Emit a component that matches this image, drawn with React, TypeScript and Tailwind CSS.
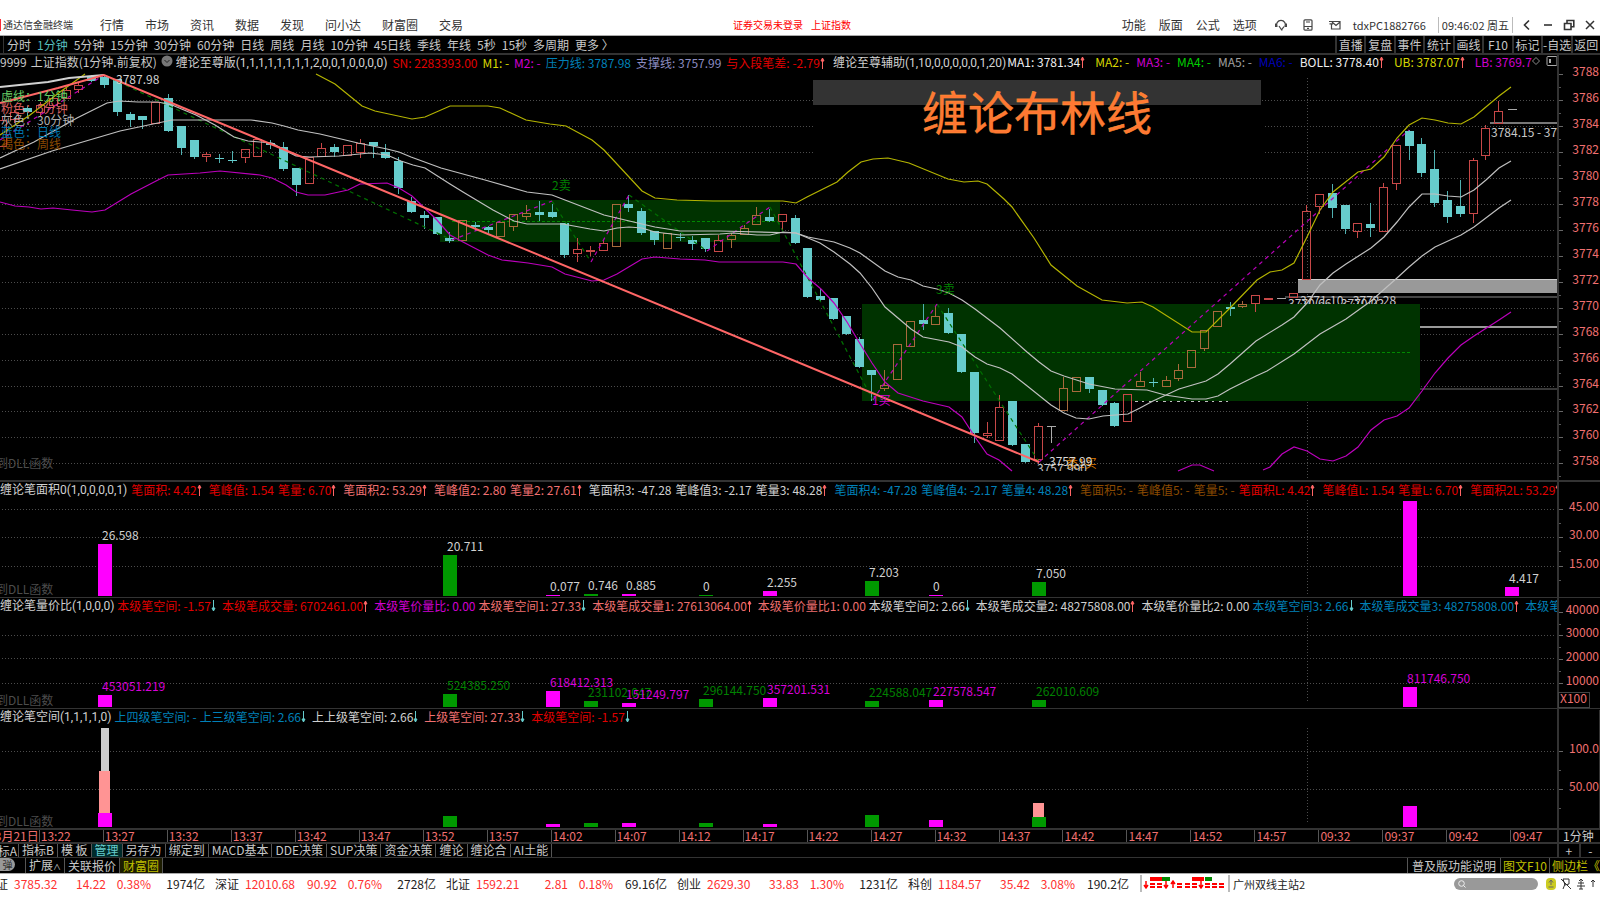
import { useState } from "react";
import type { ReactNode } from "react";
import clsx from "clsx";

/* =========================
TYPES
========================= */

type Arrow = "up" | "down";

type Indicator = {
  text: string;
  color: string;
  arrow?: Arrow;
  title?: boolean;
};

// [slot, body top, body bottom, high, low]
type Candle = [number, number, number, number, number];

type Bar = {
  slot: number;
  top: number;
  up: boolean;
  label?: string;
};

/* =========================
MENUS
========================= */

const MENU = ["行情", "市场", "资讯", "数据", "发现", "问小达", "财富圈", "交易"];
const MENU_RIGHT = ["功能", "版面", "公式", "选项"];

const PERIODS = [
  "分时", "1分钟", "5分钟", "15分钟", "30分钟", "60分钟", "日线", "周线", "月线",
  "10分钟", "45日线", "季线", "年线", "5秒", "15秒", "多周期", "更多 〉",
];

const TOOLS = ["直播", "复盘", "事件", "统计", "画线", "F10", "标记", "-自选", "返回"];

const TABS = [
  "指标B", "模 板", "管理", "另存为", "绑定到", "MACD基本", "DDE决策",
  "SUP决策", "资金决策", "缠论", "缠论合", "AI土能",
];

const TIMES = [
  "13:22", "13:27", "13:32", "13:37", "13:42", "13:47", "13:52", "13:57",
  "14:02", "14:07", "14:12", "14:17", "14:22", "14:27", "14:32", "14:37",
  "14:42", "14:47", "14:52", "14:57", "09:32", "09:37", "09:42", "09:47",
];

const QUOTES = [
  { name: "上证", price: "3785.32", change: "14.22", pct: "0.38%", amount: "1974亿" },
  { name: "深证", price: "12010.68", change: "90.92", pct: "0.76%", amount: "2728亿" },
  { name: "北证", price: "1592.21", change: "2.81", pct: "0.18%", amount: "69.16亿" },
  { name: "创业", price: "2629.30", change: "33.83", pct: "1.30%", amount: "1231亿" },
  { name: "科创", price: "1184.57", change: "35.42", pct: "3.08%", amount: "190.2亿" },
];

/* =========================
INDICATORS
========================= */

const WHITE = "text-[#d0d0d0]";
const RED = "text-[#e00000]";
const PINK = "text-[#f07070]";
const BLUE = "text-[#0080b8]";
const MAGENTA = "text-[#d000d0]";
const YELLOW = "text-[#d8d800]";
const BROWN = "text-[#8a4a00]";

const MAIN: Indicator[] = [
  { text: "缠论至尊版(1,1,1,1,1,1,1,1,2,0,0,1,0,0,0,0)", color: WHITE, title: true },
  { text: "SN: 2283393.00", color: RED },
  { text: "M1: -", color: YELLOW },
  { text: "M2: -", color: MAGENTA },
  { text: "压力线: 3787.98", color: BLUE },
  { text: "支撑线: 3757.99", color: "text-[#8c8cc0]" },
  { text: "与入段笔差: -2.79", color: RED, arrow: "up" },
  { text: "缠论至尊辅助(1,10,0,0,0,0,0,1,20)", color: WHITE, title: true },
];

const AVERAGES: Indicator[] = [
  { text: "MA1: 3781.34", color: "text-[#f0f0f0]", arrow: "up" },
  { text: "MA2: -", color: YELLOW },
  { text: "MA3: -", color: MAGENTA },
  { text: "MA4: -", color: "text-[#00d000]" },
  { text: "MA5: -", color: "text-[#a0a0a0]" },
  { text: "MA6: -", color: "text-[#0000b8]" },
  { text: "BOLL: 3778.40", color: "text-[#f0f0f0]", arrow: "up" },
  { text: "UB: 3787.07", color: YELLOW, arrow: "up" },
  { text: "LB: 3769.7", color: MAGENTA },
];

const AREA: Indicator[] = [
  { text: "缠论笔面积0(1,0,0,0,0,1)", color: WHITE, title: true },
  { text: "笔面积: 4.42", color: RED, arrow: "up" },
  { text: "笔峰值: 1.54", color: RED },
  { text: "笔量: 6.70", color: RED, arrow: "up" },
  { text: "笔面积2: 53.29", color: PINK, arrow: "up" },
  { text: "笔峰值2: 2.80", color: PINK },
  { text: "笔量2: 27.61", color: PINK, arrow: "up" },
  { text: "笔面积3: -47.28", color: WHITE },
  { text: "笔峰值3: -2.17", color: WHITE },
  { text: "笔量3: 48.28", color: WHITE, arrow: "up" },
  { text: "笔面积4: -47.28", color: BLUE },
  { text: "笔峰值4: -2.17", color: BLUE },
  { text: "笔量4: 48.28", color: BLUE, arrow: "up" },
  { text: "笔面积5: -", color: BROWN },
  { text: "笔峰值5: -", color: BROWN },
  { text: "笔量5: -", color: BROWN },
  { text: "笔面积L: 4.42", color: RED, arrow: "up" },
  { text: "笔峰值L: 1.54", color: RED },
  { text: "笔量L: 6.70", color: RED, arrow: "up" },
  { text: "笔面积2L: 53.29", color: RED, arrow: "up" },
];

const VOLUME: Indicator[] = [
  { text: "缠论笔量价比(1,0,0,0)", color: WHITE, title: true },
  { text: "本级笔空间: -1.57", color: RED, arrow: "down" },
  { text: "本级笔成交量: 6702461.00", color: RED, arrow: "up" },
  { text: "本级笔价量比: 0.00", color: MAGENTA },
  { text: "本级笔空间1: 27.33", color: PINK, arrow: "down" },
  { text: "本级笔成交量1: 27613064.00", color: PINK, arrow: "up" },
  { text: "本级笔价量比1: 0.00", color: PINK },
  { text: "本级笔空间2: 2.66", color: WHITE, arrow: "down" },
  { text: "本级笔成交量2: 48275808.00", color: WHITE, arrow: "up" },
  { text: "本级笔价量比2: 0.00", color: WHITE },
  { text: "本级笔空间3: 2.66", color: BLUE, arrow: "down" },
  { text: "本级笔成交量3: 48275808.00", color: BLUE, arrow: "up" },
  { text: "本级笔", color: BLUE },
];

const SPACE: Indicator[] = [
  { text: "缠论笔空间(1,1,1,1,0)", color: WHITE, title: true },
  { text: "上四级笔空间: -", color: BLUE },
  { text: "上三级笔空间: 2.66", color: BLUE, arrow: "down" },
  { text: "上上级笔空间: 2.66", color: WHITE, arrow: "down" },
  { text: "上级笔空间: 27.33", color: PINK, arrow: "down" },
  { text: "本级笔空间: -1.57", color: RED, arrow: "down" },
];

/* =========================
CHART DATA
========================= */

const slotX = (slot: number) => Math.round(104 + slot * 12.79);

const UP: Candle[] = [
  [-8, 120, 146, 116, 146], [-7, 112, 119, 110, 122], [-5, 105, 112, 102, 115],
  [-4, 98, 105, 96, 108], [-3, 90, 98, 88, 98], [-2, 85, 89, 82, 92],
  [4, 102, 123, 102, 123], [8, 154, 156, 152, 161], [11, 149, 157, 149, 162],
  [12, 139, 156, 139, 156], [16, 157, 183, 157, 183], [17, 148, 156, 143, 156],
  [19, 145, 155, 145, 155], [20, 143, 152, 139, 157], [28, 220, 240, 220, 240],
  [31, 222, 236, 222, 236], [32, 214, 226, 214, 230], [33, 213, 216, 205, 219],
  [37, 249, 253, 238, 261], [38, 250, 251, 246, 255], [39, 243, 250, 240, 250],
  [40, 204, 246, 204, 246], [44, 233, 248, 233, 248], [48, 240, 251, 235, 251],
  [49, 235, 239, 233, 247], [50, 228, 234, 225, 234], [51, 215, 224, 207, 224],
  [53, 214, 221, 214, 229], [61, 385, 388, 370, 390], [62, 344, 379, 344, 379],
  [63, 321, 346, 321, 346], [65, 316, 324, 306, 324], [69, 433, 435, 422, 437],
  [70, 407, 440, 395, 440], [73, 426, 459, 423, 463], [75, 388, 410, 377, 410],
  [76, 377, 391, 377, 391], [80, 394, 421, 394, 421], [81, 381, 386, 372, 386],
  [83, 380, 386, 376, 386], [84, 370, 378, 364, 380], [85, 350, 367, 350, 367],
  [86, 330, 348, 330, 350], [87, 311, 326, 311, 326], [89, 304, 306, 301, 307],
  [90, 295, 303, 295, 311], [91, 298, 299, 298, 299], [93, 293, 297, 293, 297],
  [94, 211, 279, 205, 279], [95, 194, 206, 194, 213], [98, 223, 231, 223, 237],
  [100, 187, 231, 183, 231], [101, 145, 183, 145, 189], [107, 160, 213, 158, 222],
  [108, 128, 155, 125, 159], [109, 111, 123, 101, 123],
];

const DOWN: Candle[] = [
  [-6, 108, 112, 106, 115], [-1, 76, 81, 75, 81], [0, 77, 85, 75, 87],
  [1, 79, 112, 79, 115], [2, 114, 120, 112, 126], [3, 116, 120, 116, 128],
  [5, 98, 131, 94, 131], [6, 126, 148, 126, 154], [7, 140, 157, 140, 158],
  [9, 158, 159, 154, 162], [10, 160, 161, 151, 162], [13, 143, 145, 140, 148],
  [14, 147, 169, 142, 170], [15, 168, 185, 168, 195], [18, 147, 152, 144, 156],
  [21, 142, 146, 142, 157], [22, 152, 158, 144, 158], [23, 161, 188, 157, 193],
  [24, 201, 212, 197, 212], [25, 215, 218, 211, 228], [26, 217, 234, 217, 234],
  [27, 238, 241, 232, 242], [29, 225, 227, 222, 230], [30, 227, 230, 226, 232],
  [34, 212, 215, 201, 220], [35, 212, 217, 204, 217], [36, 223, 255, 223, 257],
  [41, 204, 208, 195, 211], [42, 211, 233, 208, 234], [43, 231, 240, 231, 244],
  [45, 237, 238, 233, 240], [46, 240, 244, 236, 249], [47, 238, 249, 238, 251],
  [52, 217, 221, 209, 221], [54, 218, 243, 215, 243], [55, 248, 297, 248, 297],
  [56, 296, 300, 289, 300], [57, 298, 319, 298, 319], [58, 316, 334, 316, 334],
  [59, 339, 367, 337, 367], [60, 370, 375, 370, 400], [64, 320, 324, 304, 329],
  [66, 313, 333, 308, 333], [67, 334, 372, 334, 372], [68, 372, 433, 372, 442],
  [71, 401, 445, 401, 445], [72, 444, 462, 444, 462], [77, 377, 389, 377, 392],
  [78, 390, 405, 390, 405], [79, 403, 426, 402, 426], [82, 382, 383, 378, 386],
  [88, 307, 309, 302, 315], [96, 193, 208, 184, 217], [97, 205, 229, 205, 233],
  [99, 224, 228, 203, 236], [102, 131, 146, 130, 159], [103, 144, 173, 138, 176],
  [104, 169, 203, 150, 206], [105, 200, 217, 191, 222], [106, 206, 214, 180, 216],
];

const UPPER = [
  "0,135 30,115 60,92 85,74",
  "316,74 335,84 362,106 375,111 412,119 425,117 450,106 488,106 500,108 526,120 550,124 566,126 592,140 604,150 642,191 655,198 677,200 713,201 783,201 796,203 807,197 837,182 848,172 861,162 873,159 888,158 909,163 948,179 964,182 978,181 987,184 1004,199 1012,207 1034,238 1051,265 1077,286 1102,300 1127,303 1142,302 1153,307 1192,332 1206,332 1230,308 1257,280 1270,272 1282,270 1294,263 1307,237 1320,210 1333,192 1358,172 1371,169 1384,157 1397,138 1409,125 1422,118 1435,120 1448,123 1461,124 1474,117 1499,96 1511,87",
];

const LOWER = [
  "0,202 15,206 29,207 41,209 53,208 72,210 92,212 105,210 131,194 158,180 168,175 200,173 220,171 260,175 272,178 286,185 296,192 308,195 325,195 348,190 360,184 387,183 399,188 412,196 437,220 450,235 463,242 488,255 502,260 528,263 552,267 565,274 592,281 604,280 617,274 642,259 655,257 680,259 705,260 719,262 783,262 796,264 808,278 821,289 834,303 847,322 859,342 872,363 885,382 898,393 923,401 949,407 962,417 975,437 987,454 999,460 1012,471",
  "1178,471 1192,465 1200,465 1214,471",
  "1263,470 1270,467 1282,454 1294,447 1307,451 1320,459 1333,461 1346,456 1358,447 1371,430 1384,420 1397,416 1409,408 1422,391 1435,373 1448,358 1461,345 1474,336 1499,320 1511,312",
];

const FAST =
  "0,158 34,142 77,118 107,103 119,101 138,102 158,102 172,105 196,115 215,125 234,137 248,141 272,143 288,152 296,156 310,157 339,156 370,153 387,155 401,161 413,165 425,168 450,184 463,192 493,210 514,221 527,224 563,224 590,229 604,231 617,228 629,227 642,228 655,232 680,235 720,234 733,233 757,235 770,235 783,232 796,233 820,243 834,252 850,264 860,273 872,288 885,307 911,329 923,337 949,342 962,347 975,357 987,364 1000,368 1012,374 1026,385 1051,405 1064,413 1076,418 1089,419 1103,416 1128,414 1140,408 1153,401 1179,389 1206,381 1218,374 1230,364 1256,341 1282,325 1294,317 1307,303 1320,285 1333,273 1346,264 1371,248 1384,237 1397,222 1409,207 1422,194 1435,194 1448,196 1461,197 1474,190 1486,180 1499,168 1511,161";

const MID =
  "0,169 52,151 120,131 172,120 251,120 272,123 284,126 298,130 320,134 358,143 387,149 399,152 411,157 441,168 485,180 527,192 552,195 565,200 604,215 642,224 655,227 680,231 720,231 796,233 808,237 834,242 850,248 860,253 885,271 898,277 911,280 923,286 937,289 949,293 962,300 975,309 1000,328 1027,352 1039,362 1051,371 1064,376 1089,384 1115,389 1147,390 1165,395 1192,399 1206,399 1218,396 1230,389 1256,376 1267,371 1294,354 1320,334 1346,319 1371,301 1397,278 1409,267 1422,256 1435,247 1461,235 1474,227 1499,208 1511,200";

const PEN_UP = [
  "0,140 104,75", "452,240 552,201", "591,262 629,195", "707,251 770,207",
  "873,400 937,304", "1039,462 1409,130",
];
const PEN_DOWN = [
  "104,75 452,240", "552,201 591,262", "629,195 707,251", "770,207 873,400",
  "937,304 1039,462",
];

const AREA_BARS: Bar[] = [
  { slot: 0, top: 544, up: true, label: "26.598" },
  { slot: 27, top: 555, up: false, label: "20.711" },
  { slot: 35, top: 595, up: true, label: "0.077" },
  { slot: 38, top: 594, up: false, label: "0.746" },
  { slot: 41, top: 594, up: true, label: "0.885" },
  { slot: 47, top: 595, up: false, label: "0" },
  { slot: 52, top: 591, up: true, label: "2.255" },
  { slot: 60, top: 581, up: false, label: "7.203" },
  { slot: 65, top: 595, up: true, label: "0" },
  { slot: 73, top: 582, up: false, label: "7.050" },
  { slot: 102, top: 501, up: true },
  { slot: 110, top: 587, up: true, label: "4.417" },
];

const VOLUME_BARS: Bar[] = [
  { slot: 0, top: 695, up: true, label: "453051.219" },
  { slot: 27, top: 694, up: false, label: "524385.250" },
  { slot: 35, top: 691, up: true, label: "618412.313" },
  { slot: 38, top: 701, up: false, label: "231102.047" },
  { slot: 41, top: 703, up: true, label: "151249.797" },
  { slot: 47, top: 699, up: false, label: "296144.750" },
  { slot: 52, top: 698, up: true, label: "357201.531" },
  { slot: 60, top: 701, up: false, label: "224588.047" },
  { slot: 65, top: 700, up: true, label: "227578.547" },
  { slot: 73, top: 700, up: false, label: "262010.609" },
  { slot: 102, top: 687, up: true, label: "811746.750" },
];

const SPACE_BARS: Bar[] = [
  { slot: 0, top: 813, up: true },
  { slot: 27, top: 816, up: false },
  { slot: 35, top: 824, up: true },
  { slot: 38, top: 823, up: false },
  { slot: 41, top: 823, up: true },
  { slot: 47, top: 823, up: false },
  { slot: 52, top: 824, up: true },
  { slot: 60, top: 815, up: false },
  { slot: 65, top: 820, up: true },
  { slot: 73, top: 817, up: false },
  { slot: 102, top: 806, up: true },
];

/* =========================
SMALL PARTS
========================= */

function TrendArrow({ dir }: { dir: Arrow }) {
  return (
    <svg className="h-3 w-[5px] shrink-0" viewBox="0 0 5 12">
      {dir === "up" ? (
        <path d="M2.5 1V12M1 4L2.5 1L4 4Z" fill="#ff6666" stroke="#ff6666" />
      ) : (
        <path d="M2.5 0V11M1 8L2.5 11L4 8Z" fill="#66cccc" stroke="#66cccc" />
      )}
    </svg>
  );
}

function Indicators({ items, gap = "gap-[3px]" }: { items: Indicator[]; gap?: string }) {
  return (
    <div className={clsx("flex shrink-0", gap)}>
      {items.map((item, i) =>
        item.title ? (
          <div key={i} className={clsx("shrink-0", item.color)}>
            <span className='font-[Roboto,"Noto_Sans_CJK_SC",sans-serif]'>{item.text}</span>
          </div>
        ) : (
          <span
            key={i}
            className={clsx("flex shrink-0 items-center", item.color, item.arrow && "mr-[3px]")}
          >
            {item.text}
            {item.arrow && <TrendArrow dir={item.arrow} />}
          </span>
        )
      )}
    </div>
  );
}

function IndicatorRow({ children, className }: { children: ReactNode; className?: string }) {
  return (
    <div className={clsx("flex h-4 border-[#333] leading-[13px]", className)}>
      <div className="flex min-w-0 flex-1 items-start overflow-x-clip whitespace-nowrap">
        {children}
      </div>
      <div className="w-[43px] shrink-0 border-l-2 border-[#333]" />
    </div>
  );
}

function Axis({ ticks, from, to }: { ticks: [number, string][]; from: number; to: number }) {
  const step = ticks.length > 1 ? ticks[1][0] - ticks[0][0] : 0;
  return (
    <g>
      <rect x="1557" y={from} width="2" height={to - from} fill="#333" />
      {ticks.map(([y, text]) => (
        <g key={text}>
          <rect x="1559" y={y} width="4" height="1" fill="#666" />
          <rect x="1559" y={y + Math.round(step / 2)} width="2" height="1" fill="#555" />
          <text x="1599" y={y + 2} textAnchor="end" fill="#f07070">
            {text}
          </text>
        </g>
      ))}
    </g>
  );
}

function Grid({ rows }: { rows: number[] }) {
  return (
    <g stroke="#4c4c4c" strokeDasharray="1 2">
      {rows.map((y) => (
        <path key={y} d={`M2 ${y}.5H1555`} />
      ))}
    </g>
  );
}

function Bars({ bars, base, labelColor }: { bars: Bar[]; base: number; labelColor?: string }) {
  return (
    <g>
      {bars.map((b) => (
        <g key={b.slot}>
          <rect
            x={slotX(b.slot) - 6}
            y={b.top}
            width="14"
            height={base - b.top}
            fill={b.up ? "#ff00ff" : "#009900"}
          />
          {b.label && (
            <text
              x={slotX(b.slot) - 2}
              y={b.top - 4}
              fill={labelColor ?? (b.up ? "#d800d8" : "#008000")}
            >
              {b.label}
            </text>
          )}
        </g>
      ))}
    </g>
  );
}

const DayBreak = ({ from, to }: { from: number; to: number }) => (
  <path d={`M1307.5 ${from}V${to}`} stroke="#4c4c4c" strokeDasharray="1 2" />
);

// candles standing inside a pivot box take a browner outline
function outline([slot, top, bottom]: Candle) {
  const first = slot >= 27 && slot <= 52 && top < 240;
  const second = slot >= 60 && slot <= 89 && bottom < 412;
  return first || second ? "#a86a3c" : "#c84848";
}

/* =========================
PRICE CHART
========================= */

function PriceChart() {
  const prices: [number, string][] = Array.from({ length: 16 }, (_, i) => [
    Math.round(74.4 + i * 25.93),
    String(3788 - i * 2),
  ]);

  return (
    <svg viewBox="0 71 1600 409" className="block w-full overflow-visible text-xs">
      <Grid rows={prices.slice(1).map(([y]) => y)} />
      <rect x="813" y="106" width="450" height="64" fill="#000" />
      <DayBreak from={78} to={480} />

      {/* LEVELS */}
      <rect x="1490" y="122" width="67" height="2" fill="#777" />
      <rect x="1285" y="296" width="272" height="2" fill="#444" />
      <rect x="1298" y="279" width="259" height="14" fill="#999" />
      <path d="M1298 279.5H1557" stroke="#ccc" />
      <rect x="1419" y="326" width="138" height="2" fill="#999" />
      <rect x="1419" y="388" width="138" height="2" fill="#383838" />
      <text x="1491" y="137" fill="#c8c8c8" clipPath="url(#plot)">3784.15 - 3786.02</text>
      <text x="1288" y="308" fill="#c8c8c8">3770.66 - 3770.02</text>
      <text x="1300" y="305" fill="#c8c8c8">3771.10 - 3772.28</text>

      {/* PIVOT BOXES */}
      <rect x="440" y="200" width="340" height="42" fill="#003300" />
      <rect x="862" y="304" width="558" height="97" fill="#003300" />
      <g stroke="#008800" strokeDasharray="3 2">
        <path d="M452 221.5H778" />
        <path d="M872 352.5H1411" />
      </g>
      <path d="M1135 401.5H1230" stroke="#c0c0c0" strokeDasharray="3 4 2 5" />

      {/* CANDLES */}
      <g shapeRendering="crispEdges">
        {UP.map((c) => {
          const [slot, top, bottom, high, low] = c;
          const x = slotX(slot);
          return (
            <g key={slot} stroke={outline(c)} fill="none">
              <path d={`M${x + 0.5} ${high}V${top}M${x + 0.5} ${bottom}V${low + 1}`} />
              <rect x={x - 3.5} y={top + 0.5} width="8" height={bottom - top} />
            </g>
          );
        })}
        {DOWN.map(([slot, top, bottom, high, low]) => {
          const x = slotX(slot);
          return (
            <g key={slot} fill="#66cccc">
              <rect x={x} y={high} width="1" height={low - high + 1} fill="#4fb0b0" />
              <rect x={x - 4} y={top} width="9" height={bottom - top} />
            </g>
          );
        })}
        <g stroke="#aaa">
          <path d="M1047 426.5H1056M1051.5 426V443" />
          <path d="M1277 298.5H1286" />
          <path d="M1508 109.5H1517" />
        </g>
      </g>

      {/* PENS */}
      <g fill="none" strokeDasharray="4 4" strokeWidth="1.2">
        {PEN_DOWN.map((p) => (
          <polyline key={p} points={p} stroke="#007000" />
        ))}
        {PEN_UP.map((p) => (
          <polyline key={p} points={p} stroke="#b800b8" />
        ))}
      </g>

      {/* BANDS */}
      <g fill="none" strokeWidth="1.2">
        {UPPER.map((p) => (
          <polyline key={p} points={p} stroke="#b4b400" />
        ))}
        {LOWER.map((p) => (
          <polyline key={p} points={p} stroke="#bc00bc" />
        ))}
        <polyline points={FAST} stroke="#c0c0c0" />
        <polyline points={MID} stroke="#c0c0c0" />
        <polyline points="0,87 48,82 69,78 104,75" stroke="#d0d0d0" strokeWidth="2" />
        <polyline points="0,103 58,88 104,75 1039,462" stroke="#ff6666" strokeWidth="2" />
      </g>

      {/* NOTES */}
      <text x="116" y="84" fill="#d0d0d0">3787.98</text>
      <text x="552" y="190" fill="#008000">2卖</text>
      <text x="936" y="294" fill="#008000">3卖</text>
      <text x="872" y="405" fill="#d000d0">1买</text>
      <text x="1066" y="468" fill="#d87800">类1买</text>
      <text x="1037" y="473" fill="#c8c8c8" clipPath="url(#plot)">3757.990</text>
      <text x="1049" y="466" fill="#d8d8d8">3757.99</text>
      <text x="-4" y="468" fill="#4c4c4c">到DLL函数</text>

      {/* LEVEL LEGEND */}
      <text x="1" y="101" fill="#66cc66">虚线：1分钟</text>
      <text x="1" y="113" fill="#d86060">粉色：5分钟</text>
      <text x="1" y="125" fill="#b0b0b0">灰色：30分钟</text>
      <text x="1" y="137" fill="#0078b0">蓝色：日线</text>
      <text x="1" y="149" fill="#8a4a00">褐色：周线</text>

      {/* TITLE */}
      <rect x="813" y="80" width="448" height="25" fill="#333" />
      <text
        x="1037"
        y="130"
        textAnchor="middle"
        fontSize="46"
        fill="#ff7733"
        stroke="#ff9933"
        strokeWidth="0.4"
      >
        缠论布林线
      </text>

      <clipPath id="plot">
        <rect x="0" y="71" width="1557" height="400" />
      </clipPath>
      <Axis ticks={prices} from={71} to={480} />
    </svg>
  );
}

/* =========================
SUB CHARTS
========================= */

function AreaChart() {
  return (
    <svg viewBox="0 496 1600 101" className="block w-full overflow-visible text-xs">
      <Grid rows={[509, 537, 566]} />
      <DayBreak from={500} to={596} />
      <text x="-4" y="594" fill="#4c4c4c">到DLL函数</text>
      <Bars bars={AREA_BARS} base={596} labelColor="#d0d0d0" />
      <Axis ticks={[[509, "45.00"], [537, "30.00"], [566, "15.00"]]} from={496} to={597} />
    </svg>
  );
}

function VolumeChart() {
  return (
    <svg viewBox="0 613 1600 95" className="block w-full overflow-visible text-xs">
      <Grid rows={[635, 658, 683]} />
      <DayBreak from={616} to={703} />
      <text x="-4" y="705" fill="#4c4c4c">到DLL函数</text>
      <Bars bars={VOLUME_BARS} base={707} />
      <Axis
        ticks={[[612, "40000"], [635, "30000"], [659, "20000"], [683, "10000"]]}
        from={613}
        to={708}
      />
      <rect x="1558.5" y="692.5" width="31" height="15" fill="#000" stroke="#444" />
      <text x="1560" y="703" fill="#f07070">X100</text>
    </svg>
  );
}

function SpaceChart() {
  return (
    <svg viewBox="0 724 1600 104" className="block w-full overflow-visible text-xs">
      <Grid rows={[751, 789]} />
      <DayBreak from={728} to={824} />
      <text x="-4" y="826" fill="#4c4c4c">到DLL函数</text>
      <rect x="101" y="728" width="8" height="43" fill="#ccc" />
      <rect x="99" y="771" width="11" height="42" fill="#ff9494" />
      <rect x="1033" y="803" width="11" height="14" fill="#ff9494" />
      <Bars bars={SPACE_BARS} base={827} />
      <Axis ticks={[[751, "100.0"], [789, "50.00"]]} from={724} to={828} />
      <path d="M1599.5 710V828" stroke="#333" />
    </svg>
  );
}

/* =========================
BARS
========================= */

function TitleBar() {
  return (
    <header className="grid h-9 grid-cols-[1fr_auto_1fr] items-center border-b border-[#aaa] bg-white pt-[15px] text-[#333]">
      <div className="flex items-center whitespace-nowrap">
        <span className="h-3 w-px bg-red-500" />
        <span className="ml-0.5 w-[97px] text-[10px]">通达信金融终端</span>
        <nav className="flex gap-[21px]">
          {MENU.map((m) => (
            <button key={m} type="button">{m}</button>
          ))}
        </nav>
      </div>

      <div className="flex gap-2 pr-4 text-[10px] text-[#ff0000]">
        <span>证券交易未登录</span>
        <span>上证指数</span>
      </div>

      <div className="flex items-center justify-end whitespace-nowrap">
        <nav className="mr-[18px] flex gap-[13px]">
          {MENU_RIGHT.map((m) => (
            <button key={m} type="button">{m}</button>
          ))}
        </nav>
        <div className="mr-3 flex items-center gap-[15px]">
          <button type="button" aria-label="客服">
            <svg className="h-3 w-3" viewBox="0 0 12 12" fill="none" stroke="#444" strokeWidth="1.2">
              <path d="M2.2 7.6A4.3 4.3 0 1 1 9.8 7.6M0.5 4.5V7.5H2.4M11.5 4.5V7.5H9.6M4 7L6.5 10.8L9 7.6M6 10.8H7.5" />
            </svg>
          </button>
          <button type="button" aria-label="手机">
            <svg className="h-3 w-3" viewBox="0 0 12 12" fill="none" stroke="#444" strokeWidth="1.2">
              <rect x="2" y="0.8" width="8" height="10.4" rx="1" />
              <path d="M2 7.5H10M5 9.4H7M4 3H8" />
            </svg>
          </button>
          <button type="button" aria-label="邮件">
            <svg className="h-3 w-3" viewBox="0 0 12 12" fill="none" stroke="#444" strokeWidth="1.2">
              <path d="M2.5 5V10H11V2.5H3M0 2.5H5M0.5 4.8H4M3 3L7 6.5L11 3" />
            </svg>
          </button>
        </div>
        <span className="text-[11px]">tdxPC1882766</span>
        <span className="ml-3 flex h-4 items-center border-x border-[#bbb] px-[3px] text-[11px]">
          09:46:02 周五
        </span>
        <div className="ml-2 flex items-center gap-[9px] pr-1">
          <button type="button" aria-label="后退">
            <svg className="h-3 w-3" viewBox="0 0 12 12" fill="none" stroke="#333" strokeWidth="1.6">
              <path d="M8 1.5L3.5 6L8 10.5" />
            </svg>
          </button>
          <button type="button" aria-label="最小化">
            <svg className="h-3 w-3" viewBox="0 0 12 12" stroke="#333" strokeWidth="1.6">
              <path d="M2 6H10" />
            </svg>
          </button>
          <button type="button" aria-label="还原">
            <svg className="h-3 w-3" viewBox="0 0 12 12" fill="none" stroke="#333" strokeWidth="1.6">
              <path d="M1.5 4.5H8V10.5H1.5ZM4 4V1.5H10.8V7.8H8.5" />
            </svg>
          </button>
          <button type="button" aria-label="关闭">
            <svg className="h-3 w-3" viewBox="0 0 12 12" stroke="#333" strokeWidth="1.5">
              <path d="M2 2L10 10M10 2L2 10" />
            </svg>
          </button>
        </div>
      </div>
    </header>
  );
}

function PeriodBar() {
  const [period, setPeriod] = useState("1分钟");

  return (
    <div className="flex h-[19px] items-stretch justify-between border-b-2 border-[#333] text-[#c8c8c8]">
      <nav className="ml-[3px] flex items-center gap-[6px] border-l border-[#333] pl-[3px] whitespace-nowrap">
        {PERIODS.map((p) => (
          <button
            key={p}
            type="button"
            onClick={() => setPeriod(p)}
            className={p === period ? "text-[#55bbbb]" : undefined}
          >
            {p}
          </button>
        ))}
      </nav>
      <nav className="grid w-[265px] grid-cols-9">
        {TOOLS.map((t) => (
          <button key={t} type="button" className="border-l-2 border-[#333] whitespace-nowrap">
            {t}
          </button>
        ))}
      </nav>
    </div>
  );
}

function TimeAxis() {
  return (
    <div className="flex h-[14px] border-b-2 border-[#333] leading-[11px] text-[#f07070]">
      <div className="flex min-w-0 flex-1">
        <span className="flex min-w-0 flex-[40] justify-end overflow-x-clip whitespace-nowrap">
          3月21日
        </span>
        {TIMES.map((t, i) => (
          <span
            key={t}
            className={clsx(
              "min-w-0 border-l border-[#555] pl-px",
              i === TIMES.length - 1 ? "flex-[46]" : "flex-[64]"
            )}
          >
            {t}
          </span>
        ))}
      </div>
      <span className="w-[43px] shrink-0 border-l-2 border-[#333] pl-1 text-[#c8c8c8]">1分钟</span>
    </div>
  );
}

function TabBar() {
  return (
    <div className="flex h-[14px] justify-between border-b border-[#333] leading-[11px] text-[#c8c8c8]">
      <nav className="flex whitespace-nowrap">
        <span className="flex w-[19px] justify-end overflow-x-clip border-r border-[#555] pr-px">
          <button type="button">指标A</button>
        </span>
        {TABS.map((t) => (
          <button
            key={t}
            type="button"
            className={clsx(
              "border-r border-[#555] px-[3px] pb-0.5",
              t === "管理" && "bg-[#002b2b] text-[#66cccc]"
            )}
          >
            {t}
          </button>
        ))}
      </nav>
      <div className="grid w-[43px] grid-cols-2">
        <button type="button" className="border-l-2 border-[#333]">+</button>
        <button type="button" className="border-l-2 border-[#333]">-</button>
      </div>
    </div>
  );
}

function ExtraBar() {
  return (
    <div className="flex h-4 justify-between border-b border-[#aaa] leading-[13px] text-[#c8c8c8]">
      <div className="flex whitespace-nowrap">
        <button
          type="button"
          className="mr-[10px] h-[13px] w-[15px] rounded-r-full bg-[#999] text-[10px] leading-[13px] text-[#333]"
        >
          弹
        </button>
        <button type="button" className="border-l border-[#555] px-[3px]">
          扩展<span className="text-[8px]">∧</span>
        </button>
        <button type="button" className="border-x border-[#555] px-[3px]">关联报价</button>
        <button type="button" className="border-r border-[#555] bg-[#1c1c00] px-[3px] text-[#c0c000]">
          财富圈
        </button>
      </div>
      <div className="flex whitespace-nowrap">
        <button type="button" className="border-x border-[#555] px-1">普及版功能说明</button>
        <button type="button" className="border-r border-[#555] px-0.5 text-[#c0c000]">图文F10</button>
        <button type="button" className="pl-0.5 text-[#c0c000]">侧边栏《</button>
      </div>
    </div>
  );
}

function StatusBar() {
  return (
    <footer className="flex h-[27px] items-center overflow-hidden bg-white pb-[8px] whitespace-nowrap text-[#222]">
      <div className="-ml-4 flex">
        {QUOTES.map((q) => (
          <div key={q.name} className="flex w-[231px] text-[#ff3030]">
            <span className="w-[30px] text-[#222]">{q.name}</span>
            <span className="w-[50px]">{q.price}</span>
            <span className="w-[42px] text-right">{q.change}</span>
            <span className="w-[45px] text-right">{q.pct}</span>
            <span className="w-[54px] text-right text-[#222]">{q.amount}</span>
          </div>
        ))}
      </div>

      <svg className="mx-px h-[17px] w-[90px] shrink-0 border-x-2 border-[#bbb]" viewBox="0 0 84 17">
        <g fill="#ff0000">
          <rect x="7" y="2" width="12" height="4" />
          <rect x="49" y="2" width="12" height="4" />
        </g>
        <g fill="#008800">
          <rect x="19" y="2" width="8" height="4" />
          <rect x="62" y="2" width="7" height="4" />
        </g>
        <path
          d="M7 9H12M14 9H19M7 12H12M14 12H19M34 9H39M34 12H39M42 9H47M49 9H54M42 12H47M49 12H54M62 9H67M69 9H74M76 9H81M62 12H67M69 12H74M76 12H81"
          stroke="#ff0000"
          strokeWidth="2"
        />
        <path
          d="M3 6V13M1 10L3 13L5 10M23 6V13M21 10L23 13L25 10M30 13V7M28 9L30 6L32 9M58 6V13M56 10L58 13L60 10"
          fill="none"
          stroke="#ff0000"
          strokeWidth="1.5"
        />
      </svg>
      <span className="ml-0.5 text-[11px]">广州双线主站2</span>

      <div className="ml-auto flex items-center gap-[3px] pr-1">
        <label className="mr-1 flex h-3 w-[84px] items-center rounded-full bg-[#999] pl-1">
          <svg className="h-2 w-2 shrink-0" viewBox="0 0 8 8" fill="none" stroke="#eee">
            <circle cx="3.5" cy="3.5" r="2.8" />
            <path d="M5.5 5.5L7.5 7.5" />
          </svg>
          <input aria-label="搜索" className="min-w-0 flex-1 bg-transparent outline-none" />
        </label>
        <svg className="h-3 w-3" viewBox="0 0 12 12">
          <rect x="1" width="10" height="12" rx="4" fill="#cccc22" />
          <path d="M6 2V7M4 4.5L6 2L8 4.5M3.5 9H8.5" fill="none" stroke="#666" />
        </svg>
        <svg className="h-3 w-3" viewBox="0 0 12 12" fill="none" stroke="#333">
          <path d="M3 1H9V6L5 7ZM1 1L11 11M3 11L5 6" />
        </svg>
        <svg className="h-3 w-3" viewBox="0 0 12 12" fill="none" stroke="#333">
          <path d="M6 1V11M4 3L6 1L8 3M3 5H9M2 8H10M4 11H8" />
        </svg>
        <svg className="h-3 w-1.5" viewBox="0 0 6 12" fill="none" stroke="#333">
          <path d="M3 2V9M1 4L3 2L5 4" />
        </svg>
      </div>
    </footer>
  );
}

/* =========================
PAGE
========================= */

export default function App() {
  return (
    <div className='min-h-screen overflow-hidden bg-white font-["Noto_Sans_CJK_SC",sans-serif] text-xs leading-4'>
      <TitleBar />
      <main className="bg-black">
        <PeriodBar />

        <IndicatorRow>
          <span className="mr-1 text-[#c8c8c8]">9999</span>
          <span className="mr-1 text-[#c8c8c8]">上证指数(1分钟.前复权)</span>
          <svg className="mr-[3px] h-3 w-3 shrink-0" viewBox="0 0 12 12">
            <circle cx="6" cy="6" r="5.5" fill="#777" />
            <path d="M3.5 5L6 7.5L8.5 5" fill="none" stroke="#222" />
          </svg>
          <Indicators items={MAIN} gap="gap-[5px]" />
          <span className="w-px shrink-0" />
          <Indicators items={AVERAGES} gap="gap-[7px]" />
          <span className="ml-auto flex h-3 shrink-0 items-center gap-1.5 bg-black pr-0.5">
            <svg className="h-2 w-2" viewBox="0 0 8 8" fill="none" stroke="#888">
              <path d="M4 0.5L7.5 4L4 7.5L0.5 4Z" />
            </svg>
            <svg className="h-3 w-3" viewBox="0 0 12 12" fill="none" stroke="#aaa">
              <rect x="1" y="1.5" width="10" height="9" rx="1" />
              <path d="M4 4V8" strokeWidth="2" />
            </svg>
          </span>
        </IndicatorRow>
        <PriceChart />

        <IndicatorRow className="border-t-2">
          <Indicators items={AREA} gap="gap-1" />
        </IndicatorRow>
        <AreaChart />

        <IndicatorRow className="border-t">
          <Indicators items={VOLUME} />
        </IndicatorRow>
        <VolumeChart />

        <IndicatorRow className="border-t">
          <Indicators items={SPACE} />
        </IndicatorRow>
        <SpaceChart />

        <div className="h-0.5 bg-[#333]" />
        <TimeAxis />
        <TabBar />
        <ExtraBar />
      </main>
      <StatusBar />
    </div>
  );
}
